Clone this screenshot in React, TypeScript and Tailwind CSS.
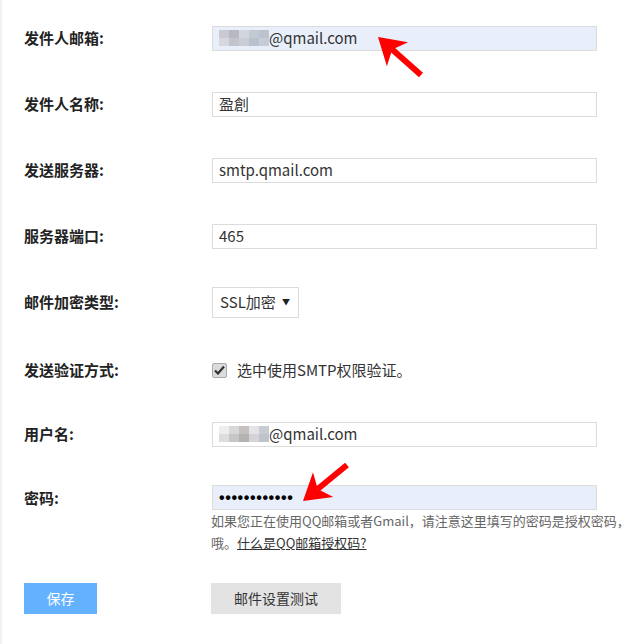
import React from "react";

const font = { fontFamily: '"Noto Sans CJK SC", "Open Sans", sans-serif' };

function Blur({ colors }: { colors: string[][] }) {
  return (
    <div className="flex flex-col">
      {colors.map((row, i) => (
        <div key={i} className="flex">
          {row.map((c, j) => (
            <div key={j} className="h-[8px] w-[10px]" style={{ background: c }} />
          ))}
        </div>
      ))}
    </div>
  );
}

function Label({ children }: { children: React.ReactNode }) {
  return <div className="w-[188px] shrink-0 text-[15px] font-bold text-[#222]">{children}</div>;
}

function Field({ children, blue }: { children: React.ReactNode; blue?: boolean }) {
  return (
    <div
      className={`flex h-[25px] w-[385px] items-center border border-[#dcdcdc] px-[6px] text-[15px] text-[#333] ${
        blue ? "bg-[#e8effa]" : "bg-white"
      }`}
    >
      {children}
    </div>
  );
}

function Arrow({ x1, y1, x2, y2 }: { x1: number; y1: number; x2: number; y2: number }) {
  const dx = x2 - x1;
  const dy = y2 - y1;
  const len = Math.sqrt(dx * dx + dy * dy);
  const ux = dx / len;
  const uy = dy / len;
  const px = -uy;
  const py = ux;
  const headLen = 26;
  const headW = 16;
  const bx = x2 - ux * headLen;
  const by = y2 - uy * headLen;
  const nx = x2 - ux * (headLen - 7);
  const ny = y2 - uy * (headLen - 7);
  const pts = `${x2},${y2} ${bx + px * headW},${by + py * headW} ${nx},${ny} ${bx - px * headW},${by - py * headW}`;
  return (
    <>
      <line x1={x1} y1={y1} x2={nx} y2={ny} stroke="#ff0000" strokeWidth={6} />
      <polygon points={pts} fill="#ff0000" />
    </>
  );
}

export default function App() {
  return (
    <div className="relative flex h-[644px] w-[632px] overflow-hidden bg-white" style={font}>
      <div className="w-[2px] shrink-0 bg-[#eef2f6]" />
      <div className="flex flex-col pl-[22px] pt-[5px]">
        <div className="flex h-[66px] items-center">
          <Label>发件人邮箱:</Label>
          <Field blue>
            <Blur
              colors={[
                ["#c9c9d1", "#b8b8c2", "#d3d6de", "#c3c9d3", "#bcc3cf"],
                ["#d6d8de", "#c2c4cc", "#c9ced6", "#b9c1cd", "#c6ccd6"],
              ]}
            />
            <span>@qmail.com</span>
          </Field>
        </div>
        <div className="flex h-[66px] items-center">
          <Label>发件人名称:</Label>
          <Field>盈創</Field>
        </div>
        <div className="flex h-[66px] items-center">
          <Label>发送服务器:</Label>
          <Field>smtp.qmail.com</Field>
        </div>
        <div className="flex h-[66px] items-center">
          <Label>服务器端口:</Label>
          <Field>465</Field>
        </div>
        <div className="flex h-[66px] items-center">
          <Label>邮件加密类型:</Label>
          <div className="flex h-[31px] w-[87px] items-center justify-between border border-[#dcdcdc] bg-white pl-[7px] pr-[8px] text-[15px] text-[#333]">
            <span>SSL加密</span>
            <span className="text-[8px] text-[#222]">▼</span>
          </div>
        </div>
        <div className="flex h-[70px] items-center">
          <Label>发送验证方式:</Label>
          <div className="flex items-center">
            <div className="flex h-[15px] w-[15px] items-center justify-center rounded-[2px] border border-[#a9a9a9] bg-[#dcdcdc]">
              <svg width="11" height="10" viewBox="0 0 11 10">
                <path d="M1 5.5 L4 8.5 L10 1.5" stroke="#333" strokeWidth="2.2" fill="none" />
              </svg>
            </div>
            <span className="ml-[10px] text-[15px] text-[#333]">选中使用SMTP权限验证。</span>
          </div>
        </div>
        <div className="flex h-[58px] items-center">
          <Label>用户名:</Label>
          <Field>
            <Blur
              colors={[
                ["#eeeeee", "#d8d8d8", "#c4c0c0", "#e4e4e6", "#c8cbd2"],
                ["#dddddd", "#c6c6c6", "#b5b2b2", "#d4d4d8", "#bfc3cb"],
              ]}
            />
            <span>@qmail.com</span>
          </Field>
        </div>
        <div className="flex items-start pt-[22px]">
          <Label>
            <div className="flex h-[27px] items-center">密码:</div>
          </Label>
          <div className="flex flex-col">
            <Field blue>
              <span className="font-['Liberation_Sans'] text-[16px] font-bold tracking-[0.6px] text-black">
                ••••••••••••
              </span>
            </Field>
            <div className="ml-[-1px] whitespace-nowrap text-[13px] leading-[22px] text-[#666]">
              如果您正在使用QQ邮箱或者Gmail，请注意这里填写的密码是授权密码，
            </div>
            <div className="ml-[-1px] whitespace-nowrap text-[13px] leading-[22px] text-[#666]">
              哦。<span className="text-[#333] underline">什么是QQ邮箱授权码?</span>
            </div>
          </div>
        </div>
        <div className="mt-[29px] flex items-center">
          <div className="w-[187px] shrink-0">
            <div className="flex h-[31px] w-[73px] items-center justify-center bg-[#64b1ff] text-[14px] text-white">
              保存
            </div>
          </div>
          <div className="flex h-[31px] w-[130px] items-center justify-center bg-[#e3e3e3] text-[14px] text-[#333]">
            邮件设置测试
          </div>
        </div>
      </div>
      <svg className="pointer-events-none absolute left-0 top-0" width="632" height="644">
        <Arrow x1={421} y1={75} x2={378} y2={37} />
        <Arrow x1={347} y1={465} x2={303} y2={501} />
      </svg>
    </div>
  );
}
